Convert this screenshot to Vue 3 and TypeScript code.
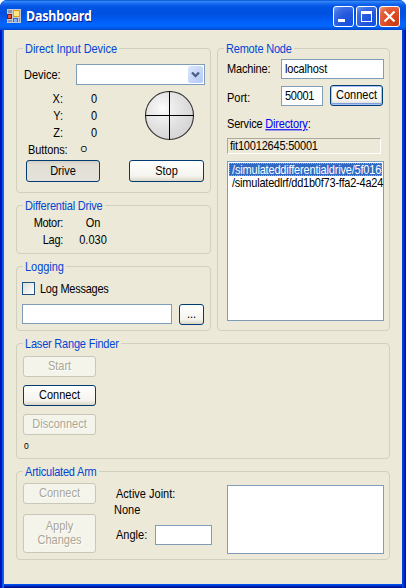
<script setup lang="ts">
import { ref } from 'vue'

interface Axis {
  name: string
  value: number
}

const axes: Axis[] = [
  { name: 'X:', value: 0 },
  { name: 'Y:', value: 0 },
  { name: 'Z:', value: 0 },
]

const services: string[] = [
  '/simulateddifferentialdrive/5f016',
  '/simulatedlrf/dd1b0f73-ffa2-4a24',
]

const selected = ref(0)
const machine = ref('localhost')
const port = ref('50001')
const logFile = ref('')
const angle = ref('')
const logging = ref(false)
</script>

<template>
  <div class="window">
    <header class="titlebar">
      <svg class="app-icon" width="14" height="14" viewBox="0 0 14 14" shape-rendering="crispEdges">
        <rect width="14" height="14" fill="#c4c8d4" />
        <rect x="1" y="1" width="4" height="3" fill="#8e96a8" />
        <rect x="0" y="5" width="5" height="5" fill="#8c1408" />
        <rect x="1" y="6" width="3" height="3" fill="#e05838" />
        <rect x="6" y="1" width="7" height="7" fill="#e0a010" />
        <rect x="7" y="2" width="5" height="5" fill="#ffe684" />
        <rect x="6" y="9" width="5" height="4" fill="#3c6cd0" />
        <rect x="7" y="10" width="3" height="3" fill="#88b0f4" />
        <rect x="12" y="9" width="1" height="4" fill="#8e96a8" />
        <rect x="1" y="11" width="4" height="2" fill="#8e96a8" />
      </svg>
      <h1 class="title"><span class="t">Dashboard</span></h1>
      <div class="caption-buttons">
        <button class="cap" aria-label="Minimize">
          <svg width="21" height="21" viewBox="0 0 21 21" shape-rendering="crispEdges"><rect x="5" y="13" width="7" height="3" fill="#fff" /></svg>
        </button>
        <button class="cap" aria-label="Maximize">
          <svg width="21" height="21" viewBox="0 0 21 21" shape-rendering="crispEdges"><path d="M5 5h11v11H5zM6 8v7h9V8z" fill="#fff" fill-rule="evenodd" /></svg>
        </button>
        <button class="cap close" aria-label="Close">
          <svg width="21" height="21" viewBox="0 0 21 21"><path d="M5.5 5.5l10 10M15.5 5.5l-10 10" stroke="#fff" stroke-width="2.2" /></svg>
        </button>
      </div>
    </header>

    <main class="client">
      <div class="top">
        <div class="left">
          <section class="group direct">
            <h2><span class="t">Direct Input Device</span></h2>
            <div class="device-row">
              <span class="t label">Device:</span>
              <div class="combo">
                <span class="drop">
                  <svg width="15" height="17" viewBox="0 0 15 17"><path d="M4 6.5l3.5 3.5L11 6.5" fill="none" stroke="#4d6185" stroke-width="2.4" /></svg>
                </span>
              </div>
            </div>
            <div class="stick-row">
              <div class="readings">
                <div v-for="axis in axes" :key="axis.name" class="axis">
                  <span class="t name">{{ axis.name }}</span>
                  <span class="t value">{{ axis.value }}</span>
                </div>
                <div class="pressed">
                  <span class="t">Buttons:</span>
                  <span class="ring">O</span>
                </div>
              </div>
              <svg class="stick" width="50" height="50" viewBox="0 0 50 50">
                <defs>
                  <radialGradient id="ball" cx="0.36" cy="0.35" r="0.66">
                    <stop offset="0" stop-color="#fff" />
                    <stop offset="0.2" stop-color="#f2f2f2" />
                    <stop offset="0.6" stop-color="#e2e2e2" />
                    <stop offset="1" stop-color="#d6d6d6" />
                  </radialGradient>
                </defs>
                <circle cx="24.5" cy="24.5" r="24" fill="url(#ball)" stroke="#333" stroke-width="1.1" />
                <path d="M24.5 0v49M0 24.5h49" stroke="#000" />
              </svg>
            </div>
            <div class="drive-row">
              <button class="btn held"><span class="t">Drive</span></button>
              <button class="btn"><span class="t">Stop</span></button>
            </div>
          </section>

          <section class="group diff">
            <h2 class="tight"><span class="t">Differential Drive</span></h2>
            <div class="status"><span class="t name">Motor:</span><span class="t value">On</span></div>
            <div class="status"><span class="t name">Lag:</span><span class="t value">0.030</span></div>
          </section>

          <section class="group logging">
            <h2><span class="t">Logging</span></h2>
            <div class="check" @click="logging = !logging">
              <span class="box" :class="{ on: logging }"></span>
              <span class="t">Log Messages</span>
            </div>
            <div class="file-row">
              <input v-model="logFile" class="field" />
              <button class="btn browse"><span class="t">...</span></button>
            </div>
          </section>
        </div>

        <section class="group remote">
          <h2 class="tight"><span class="t">Remote Node</span></h2>
          <div class="machine-row">
            <span class="t label">Machine:</span>
            <div class="field"><span class="t">{{ machine }}</span></div>
          </div>
          <div class="port-row">
            <span class="t label">Port:</span>
            <div class="field"><span class="t">{{ port }}</span></div>
            <button class="btn default"><span class="t">Connect</span></button>
          </div>
          <div class="service"><span class="t">Service <a>Directory</a>:</span></div>
          <div class="readonly"><span class="t">fit10012645:50001</span></div>
          <ul class="list">
            <li
              v-for="(service, i) in services"
              :key="service"
              :class="{ selected: i === selected }"
              @click="selected = i"
            >
              <span class="t">{{ service }}</span>
            </li>
          </ul>
        </section>
      </div>

      <section class="group laser">
        <h2 class="tight"><span class="t">Laser Range Finder</span></h2>
        <div class="stack">
          <button class="btn" disabled><span class="t">Start</span></button>
          <button class="btn"><span class="t">Connect</span></button>
          <button class="btn" disabled><span class="t">Disconnect</span></button>
        </div>
        <div class="count"><span class="t">0</span></div>
      </section>

      <section class="group arm">
        <h2 class="tight"><span class="t">Articulated Arm</span></h2>
        <div class="arm-row">
          <div class="arm-buttons">
            <button class="btn" disabled><span class="t">Connect</span></button>
            <button class="btn apply" disabled><span class="t">Apply<br />Changes</span></button>
          </div>
          <div class="joint">
            <div class="joint-label"><span class="t">Active Joint:</span></div>
            <div class="joint-name"><span class="t">None</span></div>
            <div class="angle-row">
              <span class="t label">Angle:</span>
              <input v-model="angle" class="field" />
            </div>
          </div>
          <div class="field joints"></div>
        </div>
      </section>
    </main>
  </div>
</template>

<style>
body {
  background: #fff;
  overflow: hidden;
}
</style>

<style scoped>
* {
  box-sizing: border-box;
}
.window {
  width: 406px;
  height: 588px;
  display: flex;
  flex-direction: column;
  border-radius: 7px 7px 0 0;
  overflow: hidden;
  background: linear-gradient(90deg, #0010b8 0, #0018c4 2px, #0a50e6 2px, #166aee 4px, #0050e8 402px, #0038d8 403px, #0018b0 405px, #00128c 406px);
  font-family: 'Liberation Sans', Arial, sans-serif;
  font-size: 11px;
  color: #000;
}
.t {
  display: inline-block;
  transform: translateY(-0.5px) scaleY(1.14);
  white-space: nowrap;
}
.titlebar {
  height: 30px;
  flex: none;
  display: flex;
  align-items: flex-start;
  padding: 0 6px 0 7px;
  background: linear-gradient(180deg, #0a4ccc 0, #2e86f8 1.5px, #1464ee 4px, #0054e3 7px, #0050e0 14px, #005cf4 20px, #0066ff 25px, #0062f4 27px, #0046cc 30px);
}
.app-icon {
  margin-top: 9px;
}
.title {
  margin: 9px 0 0 5px;
  font-family: 'Noto Sans', 'Open Sans', sans-serif;
  font-size: 12.5px;
  line-height: 16px;
  font-weight: 700;
  letter-spacing: -0.2px;
  color: #fff;
  text-shadow: 1px 1px 0 #0a1883;
}
.caption-buttons {
  margin: 6px 0 0 auto;
  display: flex;
  gap: 2px;
}
.cap {
  width: 21px;
  height: 21px;
  padding: 0;
  border: 1px solid #fff;
  border-radius: 3px;
  background: radial-gradient(circle at 85% 90%, #1450e0 0, #2458dc 45%, #3c6ee4 75%, #7a9cf0 100%);
}
.cap svg {
  display: block;
  margin: -1px;
}
.cap.close {
  background: radial-gradient(circle at 80% 85%, #c83c10 0, #dc4c24 45%, #e46440 75%, #f0a088 100%);
}
.client {
  flex: 1;
  margin: 0 4px 4px;
  padding: 18px 12px 0;
  background: #ece9d8;
  box-shadow: 0 1px #0050ee, 0 2px #0038d4, 0 3px #0020b0, 0 4px #001088;
}
.top {
  display: flex;
  gap: 6px;
  height: 283px;
}
.left {
  width: 195px;
  display: flex;
  flex-direction: column;
  gap: 12px;
}
.group {
  border: 1px solid #d0d0bf;
  border-radius: 4px;
}
.group h2 {
  width: max-content;
  height: 14px;
  margin: -7px 0 0 6px;
  padding: 0 2px;
  background: #ece9d8;
  font-size: 11px;
  line-height: 14px;
  font-weight: 400;
  letter-spacing: -0.05px;
  color: #0046d5;
}
.group h2.tight {
  letter-spacing: -0.2px;
}
.direct {
  height: 145px;
}
.diff {
  height: 49px;
}
.logging {
  height: 65px;
}
.remote {
  width: 173px;
  height: 283px;
}
.laser {
  width: 374px;
  height: 116px;
  margin-top: 12px;
}
.arm {
  width: 374px;
  height: 89px;
  margin-top: 12px;
}
.field {
  border: 1px solid #7f9db9;
  border-radius: 0;
  background: #fff;
  height: 20px;
  padding: 0 3px;
  outline: none;
  font: inherit;
}
div.field {
  line-height: 19px;
}
.btn {
  display: block;
  height: 22px;
  padding: 0;
  border: 1px solid #003c74;
  border-radius: 3px;
  background: linear-gradient(180deg, #fff, #f5f4ee 75%, #dcd6c8);
  font: inherit;
  line-height: 13px;
  color: #000;
  text-align: center;
}
.btn.held {
  background: linear-gradient(180deg, #d4cfc4, #e2dfd6 20%, #e4e2da);
}
.btn:disabled {
  border-color: #c9c7ba;
  background: #f5f4ea;
  color: #a8a697;
  text-shadow: 1px 1px 0 #fff;
}
.device-row {
  display: flex;
  align-items: center;
  margin: 8px 0 0 7px;
}
.device-row .label {
  width: 52px;
}
.combo {
  width: 129px;
  height: 21px;
  border: 1px solid #7f9db9;
  background: #fff;
  padding: 1px;
  display: flex;
  justify-content: flex-end;
}
.drop {
  width: 15px;
  height: 17px;
  border-radius: 2px;
  background: linear-gradient(135deg, #dce6fd, #b4c8f6);
}
.drop svg {
  display: block;
}
.stick-row {
  display: flex;
  margin-top: 6px;
  height: 69px;
}
.readings {
  width: 128px;
}
.axis {
  display: flex;
  height: 17px;
  line-height: 17px;
}
.axis .name {
  width: 46px;
  text-align: right;
}
.axis .value {
  width: 34px;
  text-align: right;
}
.pressed {
  display: flex;
  padding-left: 11px;
  line-height: 17px;
  letter-spacing: -0.1px;
}
.ring {
  margin-left: 13px;
  font-size: 8.5px;
  line-height: 15px;
}
.drive-row {
  display: flex;
  gap: 29px;
  padding-left: 9px;
}
.drive-row .btn {
  width: 74px;
}
.drive-row .btn + .btn {
  width: 75px;
}
.diff h2 {
  margin-bottom: 2px;
}
.status {
  display: flex;
  height: 17px;
  line-height: 17px;
}
.status .name {
  width: 46px;
  text-align: right;
  letter-spacing: -0.3px;
}
.status .value {
  width: 60px;
  text-align: center;
}
.check {
  display: flex;
  align-items: center;
  gap: 5px;
  margin: 8px 0 0 5px;
  height: 13px;
  letter-spacing: -0.25px;
}
.box {
  width: 13px;
  height: 13px;
  border: 1px solid #1c5180;
  background: linear-gradient(135deg, #dcdcd7, #fff);
}
.box.on {
  background: #21a121;
}
.file-row {
  display: flex;
  gap: 7px;
  margin: 9px 0 0 5px;
}
.file-row .field {
  width: 150px;
}
.browse {
  width: 25px;
  height: 21px;
}
.machine-row {
  display: flex;
  margin: 3px 0 0 9px;
  letter-spacing: -0.15px;
}
.machine-row .label,
.port-row .label {
  width: 54px;
  line-height: 20px;
}
.machine-row .field {
  width: 103px;
}
.port-row {
  display: flex;
  margin: 6px 0 0 9px;
  height: 22px;
  align-items: flex-start;
}
.port-row .label {
  line-height: 26px;
}
.port-row .field {
  width: 42px;
  margin-top: 1px;
  letter-spacing: -0.3px;
}
.default {
  width: 53px;
  height: 21px;
  margin-left: 7px;
  box-shadow: inset 0 0 0 1px #a8c4f4, inset 0 -2px 0 #7c9ce0;
}
.service {
  margin: 10px 0 0 9px;
  line-height: 14px;
  letter-spacing: -0.18px;
}
.service a {
  color: #00f;
  text-decoration: underline;
}
.readonly {
  width: 154px;
  height: 16px;
  margin: 7px 0 0 9px;
  padding-left: 2px;
  border: 1px solid;
  border-color: #aca899 #fff #fff #aca899;
  line-height: 15px;
  letter-spacing: -0.2px;
}
.list {
  width: 157px;
  height: 160px;
  margin: 7px 0 0 9px;
  padding: 1px;
  border: 1px solid #7f9db9;
  background: #fff;
  list-style: none;
}
.list li {
  height: 13px;
  padding-left: 3px;
  line-height: 14px;
  letter-spacing: -0.22px;
}
.list li.selected {
  background: #316ac5;
  color: #fff;
  letter-spacing: -0.18px;
  outline: 1px dotted #e0a040;
  outline-offset: -1px;
}
.stack {
  display: flex;
  flex-direction: column;
  gap: 8px;
  margin: 5px 0 0 6px;
}
.stack .btn,
.arm-buttons .btn {
  width: 73px;
  height: 21px;
}
.count {
  margin: 5px 0 0 7px;
  font-size: 8.5px;
  line-height: 12px;
}
.arm-row {
  display: flex;
  margin: 4px 0 0 6px;
}
.arm-buttons {
  width: 91px;
}
.arm-buttons .apply {
  height: 39px;
  margin-top: 10px;
  line-height: 11.5px;
}
.joint {
  width: 113px;
}
.joint-label {
  padding: 3px 0 0 2px;
  line-height: 16px;
}
.joint-name {
  line-height: 16px;
}
.angle-row {
  display: flex;
  margin-top: 7px;
  padding-left: 2px;
  line-height: 20px;
}
.angle-row .label {
  width: 39px;
}
.angle-row .field {
  width: 57px;
}
.joints {
  width: 157px;
  height: 69px;
  margin-top: 2px;
}
</style>
